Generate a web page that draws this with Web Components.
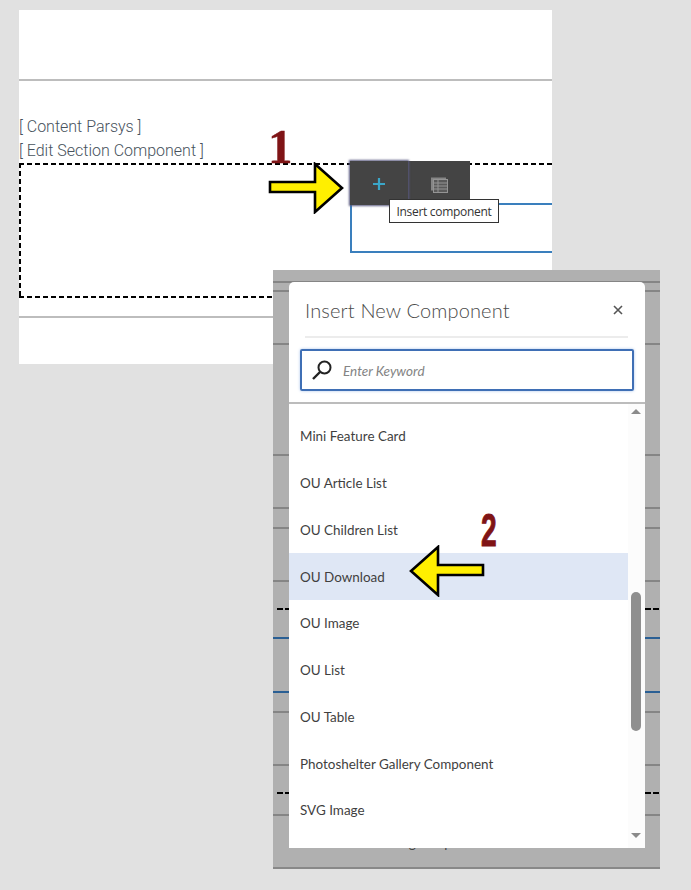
<!DOCTYPE html>
<html>
<head>
<meta charset="utf-8">
<title>Insert component</title>
<style>
    html, body { margin: 0; padding: 0; }
    body { position: relative; width: 691px; height: 890px; overflow: hidden; background: #e1e1e1; }
</style>
</head>
<body>
<page-sheet>
    <span slot="label">[ Content Parsys ]</span>
    <span slot="label">[ Edit Section Component ]</span>
</page-sheet>

<step-number kind="serif" style="left:268px; top:119px;">1</step-number>
<arrow-mark style="left:267px; top:162px;"></arrow-mark>

<insert-dialog heading="Insert New Component" placeholder="Enter Keyword">
    <component-item>Mini Feature Card</component-item>
    <component-item>OU Article List</component-item>
    <component-item>OU Children List</component-item>
    <component-item selected>OU Download</component-item>
    <component-item>OU Image</component-item>
    <component-item>OU List</component-item>
    <component-item>OU Table</component-item>
    <component-item>Photoshelter Gallery Component</component-item>
    <component-item>SVG Image</component-item>
</insert-dialog>

<step-number kind="sans" style="left:481px; top:503px;">2</step-number>
<arrow-mark flip style="left:408px; top:545px;"></arrow-mark>

<script>
    class PageSheet extends HTMLElement {
        constructor() {
            super();
            this.attachShadow({mode: "open"});
            this.shadowRoot.innerHTML = `
            <style>
                :host {
                    display: block;
                    position: relative;
                    width: 533px;
                    height: 354px;
                    margin: 10px 0 0 19px;
                    background: #fff;
                    overflow: hidden;
                }
                .rule { height: 2px; background: #bdbdbd; }
                .top { margin-top: 69px; }
                .labels {
                    display: flex;
                    flex-direction: column;
                    margin-top: 34px;
                    font: 300 16px/24px Roboto, sans-serif;
                    color: #47525c;
                }
                .section {
                    height: 135px;
                    width: 600px;
                    box-sizing: border-box;
                    padding: 40px 0 0 331px;
                    background:
                        repeating-linear-gradient(90deg, #000 0 5px, transparent 5px 8px) top / 100% 2px no-repeat,
                        repeating-linear-gradient(90deg, #000 0 5px, transparent 5px 8px) bottom / 100% 2px no-repeat,
                        repeating-linear-gradient(180deg, #000 0 5px, transparent 5px 8px) left / 2px 100% no-repeat;
                }
                .target { height: 50px; box-sizing: border-box; border: 2px solid #3a7fbd; }
                .bottom { margin-top: 18px; }
                edit-toolbar { position: absolute; left: 331px; top: 151px; }
            </style>
            <div class="rule top"></div>
            <div class="labels"><slot name="label"></slot></div>
            <div class="section"><div class="target"></div></div>
            <div class="rule bottom"></div>
            <edit-toolbar tip="Insert component"></edit-toolbar>
            `;
        }
    }

    class EditToolbar extends HTMLElement {
        constructor() {
            super();
            this.attachShadow({mode: "open"});
            this.shadowRoot.innerHTML = `
            <style>
                :host { display: flex; width: 120px; height: 44px; background: #444; }
                .add {
                    width: 58px;
                    display: flex;
                    align-items: center;
                    justify-content: center;
                    box-shadow: 0 0 2px 1px #58587f;
                    background: #444;
                    padding-top: 2px;
                    box-sizing: border-box;
                }
                .table { flex: 1; display: flex; justify-content: center; align-items: center; padding-top: 2px; }
                .tip {
                    position: absolute;
                    left: 39px;
                    top: 38px;
                    width: 110px;
                    height: 24px;
                    box-sizing: border-box;
                    border: 1px solid #333;
                    background: #fff;
                    color: #333;
                    font: 12px/24px "Open Sans", sans-serif;
                    letter-spacing: -0.3px;
                    text-align: center;
                    white-space: nowrap;
                }
            </style>
            <div class="add">
                <svg width="14" height="14" viewBox="0 0 14 14"><path d="M7 1v12M1 7h12" stroke="#3aa6c8" stroke-width="2.2"/></svg>
            </div>
            <div class="table">
                <svg width="18" height="17" viewBox="0 0 18 17">
                    <path d="M1 1.5h15v2H3v11H1z" fill="#858585"/>
                    <rect x="3.5" y="3.5" width="14" height="13" fill="#5a5a5a" stroke="#949494"/>
                    <path d="M3.5 7h14M3.5 10h14M3.5 13h14M8 4v12" stroke="#949494" fill="none"/>
                </svg>
            </div>
            <div class="tip"></div>
            `;
        }
        connectedCallback() {
            this.shadowRoot.querySelector(".tip").textContent = this.getAttribute("tip");
        }
    }

    class InsertDialog extends HTMLElement {
        constructor() {
            super();
            this.attachShadow({mode: "open"});
        }
        connectedCallback() {
            // page lines showing through the grey backdrop, y relative to the backdrop
            const greys = [12, 21, 74, 185, 238, 258, 311, 442, 495, 545];
            const blues = [368, 422];
            const dashes = [339, 523];
            const lines = greys.map(y => `<path d="M0 ${y}H387" stroke="#858585" stroke-width="2"/>`).join("")
                + blues.map(y => `<path d="M0 ${y}H387" stroke="#2a5f94" stroke-width="2"/>`).join("")
                + dashes.map(y => `<path d="M4 ${y}H387" stroke="#000" stroke-width="2" stroke-dasharray="6 2"/>`).join("");
            this.shadowRoot.innerHTML = `
            <style>
                :host {
                    display: block;
                    position: absolute;
                    left: 273px;
                    top: 270px;
                    width: 387px;
                    height: 599px;
                    box-sizing: border-box;
                    padding: 12px 15px 19px 16px;
                    background: #b0b0b0;
                    border-bottom: 2px solid #888;
                    font-family: Lato, sans-serif;
                }
                .lines { position: absolute; left: 0; top: 0; }
                .under {
                    position: absolute;
                    left: 114px;
                    top: 563px;
                    font: 13.5px/20px Lato, sans-serif;
                    color: #444;
                    white-space: nowrap;
                }
                .modal {
                    position: relative;
                    height: 100%;
                    display: flex;
                    flex-direction: column;
                    background: #fff;
                    border-radius: 5px 5px 0 0;
                }
                header {
                    display: flex;
                    justify-content: space-between;
                    align-items: center;
                    height: 54px;
                    margin: 0 17px 0 16px;
                    padding-right: 5px;
                    border-bottom: 2px solid #ececec;
                }
                h1 {
                    margin: 2px 0 0;
                    font: 300 20px/28px Lato, sans-serif;
                    color: #4b4b4b;
                    letter-spacing: 0.15px;
                }
                header svg { margin-top: 2px; }
                .search {
                    display: flex;
                    align-items: center;
                    gap: 11px;
                    height: 42px;
                    box-sizing: border-box;
                    margin: 11px;
                    padding-left: 10px;
                    border: 2px solid #3f6fb5;
                    border-radius: 2px;
                    box-shadow: 0 0 3px #a9c4ea;
                }
                .search span {
                    font: italic 13.5px Lato, sans-serif;
                    color: #848484;
                    padding-top: 2px;
                }
                .list {
                    flex: 1;
                    min-height: 0;
                    position: relative;
                    border-top: 2px solid #bcbcbc;
                    padding: 9px 17px 0 0;
                }
                .bar {
                    position: absolute;
                    right: 0;
                    top: 0;
                    bottom: 0;
                    width: 17px;
                    background: #fcfcfc;
                }
                .up, .down {
                    position: absolute;
                    left: 3px;
                    width: 0;
                    height: 0;
                    border: 5px solid transparent;
                }
                .up { top: 0; border-top: 0; border-bottom: 5px solid #8a8a8a; margin-top: 5px; }
                .down { bottom: 10px; border-bottom: 0; border-top: 5px solid #8a8a8a; }
                .thumb {
                    position: absolute;
                    left: 3px;
                    top: 188px;
                    width: 10px;
                    height: 139px;
                    border-radius: 5px;
                    background: #8f8f8f;
                }
            </style>
            <svg class="lines" width="387" height="599">${lines}</svg>
            <div class="under">Drag components here</div>
            <div class="modal">
                <header>
                    <h1>${this.getAttribute("heading")}</h1>
                    <svg width="10" height="10" viewBox="0 0 10 10"><path d="M1 1l8 8M9 1l-8 8" stroke="#555" stroke-width="1.6" fill="none"/></svg>
                </header>
                <div class="search">
                    <svg width="20" height="20" viewBox="0 0 20 20" fill="none" stroke="#222">
                        <circle cx="12.5" cy="7.5" r="6" stroke-width="2"/>
                        <path d="M8 12L1 19" stroke-width="2.4"/>
                    </svg>
                    <span>${this.getAttribute("placeholder")}</span>
                </div>
                <div class="list">
                    <slot></slot>
                    <div class="bar">
                        <div class="up"></div>
                        <div class="thumb"></div>
                        <div class="down"></div>
                    </div>
                </div>
            </div>
            `;
        }
    }

    class ComponentItem extends HTMLElement {
        constructor() {
            super();
            this.attachShadow({mode: "open"});
            this.shadowRoot.innerHTML = `
            <style>
                :host {
                    display: flex;
                    align-items: center;
                    height: 46.75px;
                    padding-left: 11px;
                    font: 13.45px Lato, sans-serif;
                    color: #3f3f3f;
                    white-space: nowrap;
                }
                :host([selected]) { background: #dfe7f5; }
            </style>
            <slot></slot>
            `;
        }
    }

    class ArrowMark extends HTMLElement {
        constructor() {
            super();
            this.attachShadow({mode: "open"});
            this.shadowRoot.innerHTML = `
            <style>
                :host { display: block; position: absolute; width: 78px; height: 52px; }
                :host([flip]) { transform: scaleX(-1); }
                svg { display: block; }
            </style>
            <svg width="78" height="52" viewBox="0 0 78 52">
                <path d="M3 20H48V2L75 26 48 50V30H3Z" fill="#ffef00" stroke="#000" stroke-width="2.6" stroke-linejoin="miter"/>
            </svg>
            `;
        }
    }

    class StepNumber extends HTMLElement {
        constructor() {
            super();
            this.attachShadow({mode: "open"});
            this.shadowRoot.innerHTML = `
            <style>
                :host {
                    display: block;
                    position: absolute;
                    color: #7f1416;
                    white-space: nowrap;
                    transform-origin: left top;
                }
                :host([kind="serif"]) {
                    font: bold 49px/56px "Liberation Serif", serif;
                    -webkit-text-stroke: 0.4px #7f1416;
                }
                :host([kind="sans"]) {
                    font: bold 47px/54px "Liberation Sans", sans-serif;
                    transform: scaleX(0.6);
                    -webkit-text-stroke: 1px #7f1416;
                }
            </style>
            <slot></slot>
            `;
        }
    }

    customElements.define("edit-toolbar", EditToolbar);
    customElements.define("page-sheet", PageSheet);
    customElements.define("component-item", ComponentItem);
    customElements.define("insert-dialog", InsertDialog);
    customElements.define("arrow-mark", ArrowMark);
    customElements.define("step-number", StepNumber);
</script>
</body>
</html>
